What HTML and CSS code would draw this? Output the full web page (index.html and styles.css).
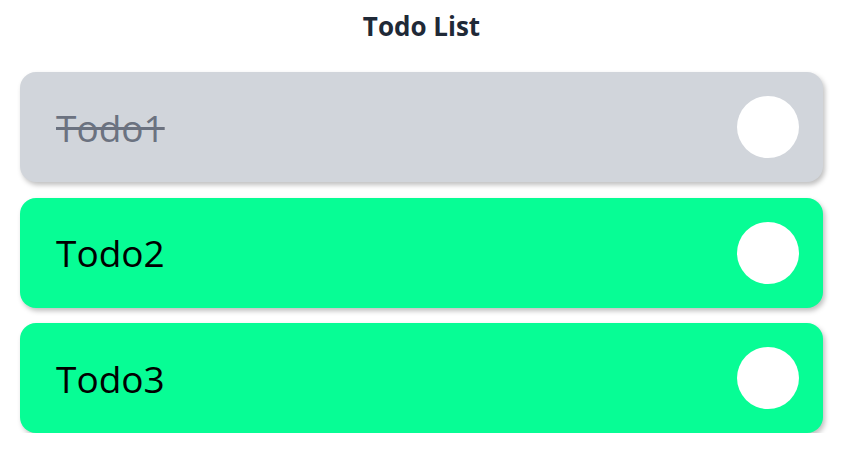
FILE: index.html
```html
<!DOCTYPE html>
<html>
<head>
<meta charset="utf-8">
<link rel="stylesheet" href="styles.css">
</head>
<body>
<div class="app">
  <h1 class="title">Todo List</h1>
  <ul class="list">
    <li class="item done"><span class="label">Todo1</span><span class="toggle"></span></li>
    <li class="item"><span class="label">Todo2</span><span class="toggle"></span></li>
    <li class="item"><span class="label">Todo3</span><span class="toggle"></span></li>
  </ul>
</div>
</body>
</html>
```
FILE: styles.css
```css
html, body {
  margin: 0;
  padding: 0;
  background: #ffffff;
}
body {
  font-family: "Open Sans", "Noto Sans", sans-serif;
}
.app {
  padding: 0 40px 0 20px;
}
.title {
  margin: 0;
  height: 72px;
  box-sizing: border-box;
  padding-top: 8px;
  text-align: center;
  font-size: 26px;
  line-height: 36px;
  font-weight: 700;
  color: #1f2937;
}
.list {
  list-style: none;
  margin: 0;
  padding: 0;
  display: flex;
  flex-direction: column;
  gap: 15.5px;
}
.item {
  display: flex;
  align-items: center;
  justify-content: space-between;
  height: 110px;
  box-sizing: border-box;
  padding: 0 24px 0 36px;
  border-radius: 16px;
  background: #07fd95;
  box-shadow: 2px 3px 5px rgba(0, 0, 0, 0.25);
}
.item.done {
  background: #d1d5db;
}
.label {
  font-size: 37px;
  color: #000000;
}
.item.done .label {
  color: #6b7280;
  text-decoration: line-through;
}
.toggle {
  width: 62px;
  height: 62px;
  border-radius: 50%;
  background: #ffffff;
}
```
